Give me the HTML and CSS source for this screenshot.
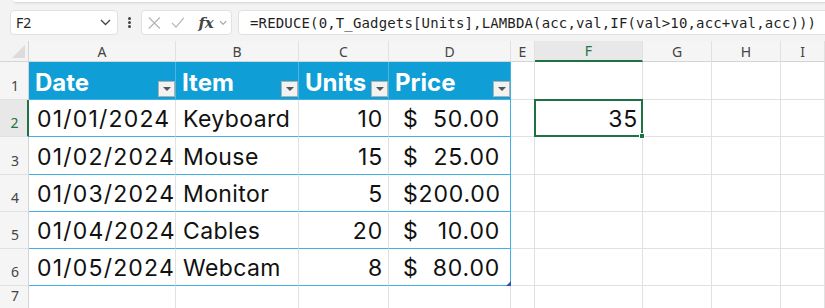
FILE: index.html
```html
<!DOCTYPE html>
<html lang="en">
  <head>
    <meta charset="UTF-8" />
    <title>Book1 - Excel</title>
    <link rel="stylesheet" href="styles.css">
  </head>
  <body>
    <div class="top">
      <div class="ribbon-edge"></div>
      <div class="formula-bar">
        <div class="name-box">
          <span>F2</span>
          <svg width="11" height="7" viewBox="0 0 11 7"><path d="M1 1 L5.5 5.5 L10 1" fill="none" stroke="#444" stroke-width="1.3"/></svg>
        </div>
        <div class="dots">
          <span></span><span></span><span></span>
        </div>
        <div class="fx-box">
          <svg width="14" height="14" viewBox="0 0 14 14"><path d="M1 1 L13 13 M13 1 L1 13" stroke="#b4b4b4" stroke-width="1.3"/></svg>
          <svg width="15" height="13" viewBox="0 0 15 13"><path d="M1 7 L5.5 11.5 L14 1.5" fill="none" stroke="#b4b4b4" stroke-width="1.3"/></svg>
          <span class="fx">fx</span>
          <svg width="9" height="6" viewBox="0 0 9 6"><path d="M1 1 L4.5 4.5 L8 1" fill="none" stroke="#999" stroke-width="1.1"/></svg>
        </div>
        <div class="formula">=REDUCE(0,T_Gadgets[Units],LAMBDA(acc,val,IF(val&gt;10,acc+val,acc)))</div>
      </div>
    </div>

    <div class="sheet">
      <!-- column headers -->
      <div class="corner"><span class="tri"></span></div>
      <div class="colh">A</div>
      <div class="colh">B</div>
      <div class="colh">C</div>
      <div class="colh">D</div>
      <div class="colh">E</div>
      <div class="colh active">F</div>
      <div class="colh">G</div>
      <div class="colh">H</div>
      <div class="colh">I</div>

      <!-- row 1 -->
      <div class="rowh">1</div>
      <div class="cell th"><span>Date</span><span class="filter"></span></div>
      <div class="cell th"><span>Item</span><span class="filter"></span></div>
      <div class="cell th"><span>Units</span><span class="filter"></span></div>
      <div class="cell th last"><span>Price</span><span class="filter"></span></div>
      <div class="cell"></div>
      <div class="cell"></div>
      <div class="cell"></div>
      <div class="cell"></div>
      <div class="cell"></div>

      <!-- row 2 -->
      <div class="rowh active">2</div>
      <div class="cell td date">01/01/2024</div>
      <div class="cell td">Keyboard</div>
      <div class="cell td num">10</div>
      <div class="cell td last money"><span>$</span><span>50.00</span></div>
      <div class="cell"></div>
      <div class="cell sel num">35<span class="handle"></span></div>
      <div class="cell"></div>
      <div class="cell"></div>
      <div class="cell"></div>

      <!-- row 3 -->
      <div class="rowh">3</div>
      <div class="cell td date">01/02/2024</div>
      <div class="cell td">Mouse</div>
      <div class="cell td num">15</div>
      <div class="cell td last money"><span>$</span><span>25.00</span></div>
      <div class="cell"></div>
      <div class="cell"></div>
      <div class="cell"></div>
      <div class="cell"></div>
      <div class="cell"></div>

      <!-- row 4 -->
      <div class="rowh">4</div>
      <div class="cell td date">01/03/2024</div>
      <div class="cell td">Monitor</div>
      <div class="cell td num">5</div>
      <div class="cell td last money"><span>$</span><span>200.00</span></div>
      <div class="cell"></div>
      <div class="cell"></div>
      <div class="cell"></div>
      <div class="cell"></div>
      <div class="cell"></div>

      <!-- row 5 -->
      <div class="rowh">5</div>
      <div class="cell td date">01/04/2024</div>
      <div class="cell td">Cables</div>
      <div class="cell td num">20</div>
      <div class="cell td last money"><span>$</span><span>10.00</span></div>
      <div class="cell"></div>
      <div class="cell"></div>
      <div class="cell"></div>
      <div class="cell"></div>
      <div class="cell"></div>

      <!-- row 6 -->
      <div class="rowh">6</div>
      <div class="cell td date">01/05/2024</div>
      <div class="cell td">Webcam</div>
      <div class="cell td num">8</div>
      <div class="cell td last money"><span>$</span><span>80.00</span><span class="resize"></span></div>
      <div class="cell"></div>
      <div class="cell"></div>
      <div class="cell"></div>
      <div class="cell"></div>
      <div class="cell"></div>

      <!-- row 7 -->
      <div class="rowh">7</div>
      <div class="cell"></div>
      <div class="cell"></div>
      <div class="cell"></div>
      <div class="cell"></div>
      <div class="cell"></div>
      <div class="cell"></div>
      <div class="cell"></div>
      <div class="cell"></div>
      <div class="cell"></div>
    </div>
  </body>
</html>
```

FILE: styles.css
```css
* {
  box-sizing: border-box;
}

html,
body {
  margin: 0;
  height: 100%;
  overflow: hidden;
  background: #ffffff;
  font-family: "Noto Sans", "Open Sans", sans-serif;
}

.top {
  background: #f3f3f3;
  height: 41px;
}

.ribbon-edge {
  height: 3px;
  margin-left: 13px;
  background: #ffffff;
  border-bottom: 1px solid #dcdcdc;
  border-bottom-left-radius: 4px;
  box-shadow: 0 1px 2px rgba(0, 0, 0, 0.06);
}

.formula-bar {
  display: flex;
  align-items: center;
  padding: 7px 0 0 10px;
  white-space: nowrap;
}

.name-box,
.fx-box,
.formula {
  height: 25px;
  background: #ffffff;
  border: 1px solid #e1e1e1;
  border-radius: 4px;
  display: flex;
  align-items: center;
}

.name-box {
  width: 108px;
  padding: 0 6px 0 5px;
  justify-content: space-between;
  font-size: 14px;
  color: #222;
}

.dots {
  width: 15px;
  margin: 0 4px;
  display: flex;
  flex-direction: column;
  align-items: center;
  gap: 1px;
}

.dots span {
  width: 3px;
  height: 3px;
  border-radius: 50%;
  background: #444;
}

.fx-box {
  width: 91px;
  margin-right: 6px;
  padding: 0 4px 0 6px;
  gap: 10px;
}

.fx {
  font-family: "DejaVu Serif", "Liberation Serif", serif;
  font-style: italic;
  font-weight: bold;
  font-size: 15px;
  color: #444;
  margin-left: 4px;
  margin-right: -5px;
}

.formula {
  flex: 1;
  margin-right: -20px;
  padding-left: 11px;
  font-family: "DejaVu Sans Mono", "Liberation Mono", monospace;
  font-size: 14px;
  letter-spacing: 0.15px;
  color: #1f1f1f;
}

/* grid */

.sheet {
  display: grid;
  grid-template-columns: 29px 147px 123px 90px 122px 24px 108px 69px 69px 1fr;
  grid-template-rows: 21px 38px 37px 38px 37px 37px 37px 1fr;
  height: calc(100% - 41px);
}

.corner {
  background: #f3f3f3;
  border-right: 1px solid #d4d4d4;
  border-bottom: 1px solid #d4d4d4;
  position: relative;
}

.corner .tri {
  position: absolute;
  right: 3px;
  bottom: 3px;
  width: 0;
  height: 0;
  border-left: 13px solid transparent;
  border-bottom: 13px solid #dcdcdc;
}

.colh {
  background: #f5f5f5;
  border-right: 1px solid #e1e1e1;
  border-bottom: 1px solid #d4d4d4;
  font-size: 14px;
  color: #444;
  display: flex;
  align-items: center;
  justify-content: center;
}

.colh.active {
  background: #e8e8e8;
  color: #1f7244;
  border-bottom: 2px solid #1f7244;
}

.rowh {
  background: #f5f5f5;
  border-right: 1px solid #d4d4d4;
  border-bottom: 1px solid #e1e1e1;
  font-size: 14px;
  color: #444;
  display: flex;
  align-items: flex-end;
  justify-content: center;
  padding-bottom: 4px;
  padding-left: 2px;
}

.rowh.active {
  background: #e8e8e8;
  color: #1f7244;
  border-right: 2px solid #1f7244;
}

.cell {
  border-right: 1px solid #e1e1e1;
  border-bottom: 1px solid #e1e1e1;
  display: flex;
  align-items: center;
  padding: 2px 6px 0 8px;
  font-family: "Inter", "Noto Sans", sans-serif;
  font-size: 23px;
  color: #111;
  white-space: nowrap;
  position: relative;
}

.th {
  background: #0f9ed5;
  color: #ffffff;
  font-weight: bold;
  font-size: 24px;
  padding: 4px 0 0 6px;
  border-right-color: rgba(255, 255, 255, 0.25);
  border-bottom-color: #3fb0e2;
}

.th .filter {
  margin-left: auto;
  align-self: flex-end;
  margin-bottom: 2px;
  width: 17px;
  height: 16px;
  background: #f2f2f2;
  border: 1px solid #b0b0b0;
  display: flex;
  align-items: center;
  justify-content: center;
}

.th .filter::after {
  content: "";
  width: 0;
  height: 0;
  border-left: 4px solid transparent;
  border-right: 4px solid transparent;
  border-top: 4px solid #555;
}

.td {
  border-bottom-color: #3fb0e2;
  padding-left: 7px;
  letter-spacing: 0.4px;
}

.date {
  letter-spacing: 1.2px;
  padding-left: 8px;
}

.last {
  border-right-color: #3fb0e2;
}

.num {
  justify-content: flex-end;
  letter-spacing: 0.8px;
  padding-right: 5px;
}

.money {
  justify-content: space-between;
  letter-spacing: 0.8px;
  padding-left: 14px;
  padding-right: 10px;
}

.resize {
  position: absolute;
  right: -1px;
  bottom: -1px;
  width: 0;
  height: 0;
  border-left: 5px solid transparent;
  border-bottom: 5px solid #3b4cae;
}

.sel {
  border: 2px solid #1f7244;
  margin: -1px 0 0 -1px;
  padding-right: 3px;
  z-index: 1;
}

.handle {
  position: absolute;
  right: -4px;
  bottom: -4px;
  width: 6px;
  height: 6px;
  background: #1f7244;
  border: 1px solid #ffffff;
}
```
